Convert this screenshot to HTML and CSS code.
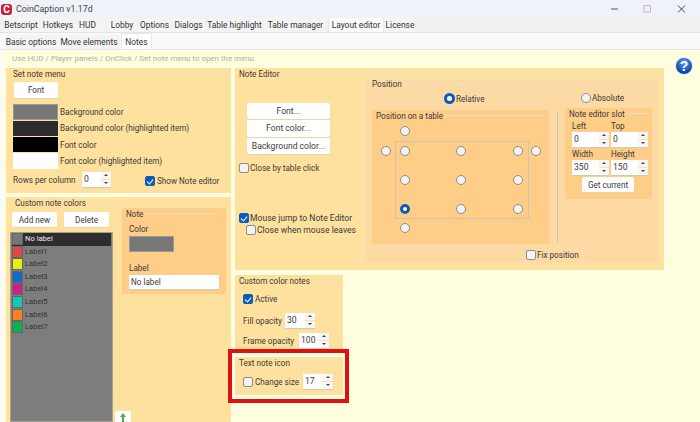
FILE: index.html
```html
<!DOCTYPE html>
<html lang="en">
<head>
  <meta charset="UTF-8">
  <title>CoinCaption</title>
  <link rel="stylesheet" href="styles.css">
</head>
<body>

<!-- Title bar -->
<div class="titlebar">
  <span class="appicon">C</span>
  <span class="apptitle">CoinCaption v1.17d</span>
  <svg class="winbtns" width="80" height="12" viewBox="0 0 80 12">
    <path d="M0 6h7" stroke="#555" fill="none"/>
    <rect x="33" y="2.5" width="6.5" height="6.5" stroke="#bbb" fill="none"/>
    <path d="M67 2.5l7 7M74 2.5l-7 7" stroke="#444" fill="none"/>
  </svg>
</div>

<!-- Tabs -->
<div class="tabs top">
  <span class="tab w36">Betscript</span>
  <span class="tab w36">Hotkeys</span>
  <span class="tab w29 left">HUD</span>
  <span class="tab w30">Lobby</span>
  <span class="tab w33">Options</span>
  <span class="tab w33">Dialogs</span>
  <span class="tab w57">Table highlight</span>
  <span class="tab w63">Table manager</span>
  <span class="tab w56 active">Layout editor</span>
  <span class="tab w30">License</span>
</div>
<div class="tabs sub">
  <span class="tab w52">Basic options</span>
  <span class="tab w62">Move elements</span>
  <span class="tab w31 active">Notes</span>
</div>

<div class="content">
  <p class="hint">Use HUD / Player panels / OnClick / Set note menu to open the menu</p>
  <span class="help">?</span>

  <div class="columns">
    <!-- Left column -->
    <div class="col-left">
      <section class="panel menu-panel">
        <div class="legend">Set note menu</div>
        <button class="btn font-btn">Font</button>
        <div class="color-row"><span class="swatch gray"></span>Background color</div>
        <div class="color-row"><span class="swatch dark"></span>Background color (highlighted item)</div>
        <div class="color-row"><span class="swatch black"></span>Font color</div>
        <div class="color-row"><span class="swatch white"></span>Font color (highlighted item)</div>
        <div class="rows-row">
          <span class="rows-cap">Rows per column</span>
          <span class="spin"><span class="val">0</span><span class="arrows"><i class="up"></i><i class="down"></i></span></span>
          <label class="check show-editor"><input type="checkbox" checked>Show Note editor</label>
        </div>
      </section>

      <section class="panel colors-panel">
        <div class="list-side">
          <div class="legend">Custom note colors</div>
          <div class="list-btns">
            <button class="btn">Add new</button>
            <button class="btn">Delete</button>
          </div>
          <ul class="labels">
            <li class="sel"><span class="chip chip0"></span>No label</li>
            <li><span class="chip chip1"></span>Label1</li>
            <li><span class="chip chip2"></span>Label2</li>
            <li><span class="chip chip3"></span>Label3</li>
            <li><span class="chip chip4"></span>Label4</li>
            <li><span class="chip chip5"></span>Label5</li>
            <li><span class="chip chip6"></span>Label6</li>
            <li><span class="chip chip7"></span>Label7</li>
          </ul>
        </div>
        <div class="note-side">
          <div class="note-box">
            <div class="legend">Note</div>
            <div class="note-cap">Color</div>
            <span class="swatch gray note-swatch"></span>
            <div class="note-cap label-cap">Label</div>
            <div class="textbox">No label</div>
          </div>
          <button class="btn up-btn">
            <svg width="6" height="9" viewBox="0 0 6 9"><path d="M3 0l3 4H4v5H2V4H0z" fill="#4fa84f"/></svg>
          </button>
        </div>
      </section>
    </div>

    <!-- Right column -->
    <div class="col-right">
      <section class="panel editor-panel">
        <div class="legend">Note Editor</div>
        <div class="editor-body">
          <div class="editor-side">
            <div class="editor-btns">
              <button class="btn">Font...</button>
              <button class="btn">Font color...</button>
              <button class="btn">Background color...</button>
            </div>
            <label class="check close-table"><input type="checkbox">Close by table click</label>
            <label class="check mouse-jump"><input type="checkbox" checked>Mouse jump to Note Editor</label>
            <label class="check close-leave"><input type="checkbox">Close when mouse leaves</label>
          </div>

          <div class="position">
            <div class="legend">Position</div>
            <div class="pos-modes">
              <label class="check relative"><input type="radio" name="mode" checked>Relative</label>
              <label class="check absolute"><input type="radio" name="mode">Absolute</label>
            </div>
            <div class="pos-body">
              <div class="table-box">
                <div class="legend">Position on a table</div>
                <div class="seats">
                  <span class="table-rect"></span>
                  <input type="radio" name="seat" class="col2 row1">
                  <input type="radio" name="seat" class="col1 row2">
                  <input type="radio" name="seat" class="col2 row2">
                  <input type="radio" name="seat" class="col3 row2">
                  <input type="radio" name="seat" class="col4 row2">
                  <input type="radio" name="seat" class="col5 row2">
                  <input type="radio" name="seat" class="col2 row3">
                  <input type="radio" name="seat" class="col3 row3">
                  <input type="radio" name="seat" class="col4 row3">
                  <input type="radio" name="seat" class="col2 row4" checked>
                  <input type="radio" name="seat" class="col3 row4">
                  <input type="radio" name="seat" class="col4 row4">
                  <input type="radio" name="seat" class="col2 row5">
                </div>
              </div>
              <span class="divider"></span>
              <div class="slot-box">
                <div class="legend">Note editor slot</div>
                <div class="slot-grid">
                  <div><div class="slot-cap">Left</div><span class="spin w37"><span class="val">0</span><span class="arrows"><i class="up"></i><i class="down"></i></span></span></div>
                  <div><div class="slot-cap">Top</div><span class="spin w37"><span class="val">0</span><span class="arrows"><i class="up"></i><i class="down"></i></span></span></div>
                  <div><div class="slot-cap">Width</div><span class="spin w37"><span class="val">350</span><span class="arrows"><i class="up"></i><i class="down"></i></span></span></div>
                  <div><div class="slot-cap">Height</div><span class="spin w37"><span class="val">150</span><span class="arrows"><i class="up"></i><i class="down"></i></span></span></div>
                </div>
                <button class="btn get-current">Get current</button>
              </div>
            </div>
            <label class="check fix-pos"><input type="checkbox">Fix position</label>
          </div>
        </div>
      </section>

      <section class="panel custom-panel">
        <div class="legend">Custom color notes</div>
        <label class="check active-check"><input type="checkbox" checked>Active</label>
        <div class="opacity-row fill"><span class="fill-cap">Fill opacity</span><span class="spin"><span class="val">30</span><span class="arrows"><i class="up"></i><i class="down"></i></span></span></div>
        <div class="opacity-row frame"><span class="frame-cap">Frame opacity</span><span class="spin"><span class="val">100</span><span class="arrows"><i class="up"></i><i class="down"></i></span></span></div>
      </section>

      <div class="redbox">
        <section class="panel icon-panel">
          <div class="legend">Text note icon</div>
          <div class="size-row">
            <label class="check size-check"><input type="checkbox">Change size</label>
            <span class="spin"><span class="val">17</span><span class="arrows"><i class="up"></i><i class="down"></i></span></span>
          </div>
        </section>
      </div>
    </div>
  </div>
</div>

</body>
</html>
```

FILE: styles.css
```css
*{box-sizing:border-box}
html,body{height:100%}
body{margin:0;width:700px;height:422px;overflow:hidden;display:flex;flex-direction:column;background:#ffffdf;font-family:Roboto,sans-serif;font-size:8.15px;line-height:12px;color:#3a3a3a}
p{margin:0}

/* title bar */
.titlebar{height:18px;flex:none;display:flex;align-items:center;background:#eff2f9;position:relative}
.appicon{width:11px;height:11px;margin-left:1px;border-radius:3px;background:#c8203c;color:#fff;font-weight:700;font-size:10px;line-height:11px;text-align:center}
.apptitle{margin-left:4px;color:#444;font-size:8.8px}
.winbtns{margin-left:auto;margin-right:9px}

/* tabs */
.tabs{display:flex;flex:none;font-size:8.4px}
.tabs.top{height:15px;padding-left:3px;background:#f0f0f0;border-bottom:1px solid #e4e4e4;gap:1px}
.tabs.sub{height:17px;padding-left:5px;padding-top:2px;background:#f9f9f9;border-bottom:1px solid #e6e6e6;gap:1px}
.tab{text-align:center;background:#f4f4f4;line-height:15px;color:#333;white-space:nowrap}
.tab.left{text-align:left;padding-left:2px}
.tab.active{background:#fbfbfb;margin-top:-1px;border:1px solid #e8e8e8;border-bottom:none;line-height:14px}
.tabs.sub .tab.active{background:#fff;margin-top:-2px;line-height:17px}
.w29{width:29px}.w30{width:30px}.w31{width:31px}.w33{width:33px}.w36{width:36px}.w52{width:52px}.w56{width:56px}.w57{width:57px}.w62{width:62px}.w63{width:63px}

.content{flex:1;min-height:0;position:relative;border-left:3px solid #fafafa;padding-left:3px}
.hint{height:18px;padding:3px 0 0 6px;color:#aeaeae;font-size:7.95px}
.help{position:absolute;left:672px;top:7px;width:18px;height:18px;border-radius:50%;background:radial-gradient(circle at 50% 30%,#5d9ce8,#0d47a8 70%);border:1px solid #dfe7f2;color:#fff;font-family:"Liberation Sans",sans-serif;font-weight:700;font-size:14px;line-height:16px;text-align:center}

.columns{display:flex;gap:4px}
.col-left{width:225px;display:flex;flex-direction:column;gap:4px}
.col-right{width:429px;display:flex;flex-direction:column}

/* panels */
.panel{background:#fee19e;padding:0 4px}
.legend{display:flex;align-items:center;gap:2px;height:11px;color:#3a3a3a;white-space:nowrap}
.legend::after{content:"";flex:1;height:1px;background:#ece3c6}

.btn{display:block;height:15px;padding:0;border:none;border-radius:2px;background:#fff;box-shadow:0 1px 1px #e3d5ae;font:inherit;color:#3a3a3a;line-height:14px}

input{appearance:none;margin:0;width:10px;height:10px;background:#f4f4f4;border:1px solid #8d8d8d;flex:none}
input[type=checkbox]{border-radius:2px}
input[type=checkbox]:checked{background:#0b5cbd;border-color:#0b5cbd;position:relative}
input[type=checkbox]:checked::after{content:"";position:absolute;left:2px;top:1px;width:3px;height:5px;border:solid #fff;border-width:0 1px 1px 0;transform:rotate(40deg)}
input[type=radio]{border-radius:50%}
input[type=radio]:checked{background:#fff;border:3px solid #0b5cbd}
.check{display:flex;align-items:center;gap:1px;white-space:nowrap}

.spin{display:inline-flex;width:30px;height:15px;background:#fff;box-shadow:0 1px 1px #d8caa4;font-size:8.6px}
.spin .val{flex:1;padding-left:2px;line-height:14px}
.spin .arrows{width:10px;display:flex;flex-direction:column;gap:1px;background:#fee19e}
.spin i{flex:1;background:#f6f6f6;position:relative}
.spin i::after{content:"";position:absolute;left:3px;top:2px;border:2px solid transparent;border-top:none;border-bottom:2px solid #444}
.spin i.down::after{border-bottom:none;border-top:2px solid #444}
.spin.w37{width:37px}

/* set note menu */
.menu-panel{height:125px;padding:0 7px}
.font-btn{width:44px;height:16px;margin:3px 0 6px 1px}
.color-row{display:flex;align-items:center;gap:2px;height:16.3px}
.swatch{display:block;width:45px;height:15.5px}
.gray{background:#777;border:1px solid #999}
.dark{background:#2d2d2d}
.black{background:#000}
.white{background:#fff}
.rows-row{display:flex;align-items:center;margin-top:3px;white-space:nowrap}
.rows-cap{width:69px}
.rows-row .spin{width:29px}
.show-editor{margin-left:34px;margin-top:3px;gap:2px}

/* custom note colors */
.colors-panel{height:240px;display:flex;gap:9px;padding:0}
.colors-panel .legend{margin-left:5px}
.list-side{width:108px;padding-left:4px}
.list-btns{display:flex;gap:7px;margin:4px 0 5px 2px}
.list-btns .btn{width:45px}
.labels{margin:0;padding:0 1px;list-style:none;height:190px;width:103px;background:#7d7d7d;border:1px solid #a3a38f}
.labels li{display:flex;align-items:center;gap:2px;height:12.55px;color:#333;font-size:7.6px}
.labels li.sel{background:#2d2d2d;color:#eee}
.chip{width:11px;height:12px;border:1px solid #666}
.chip0{background:#777}.chip1{background:#e04848}.chip2{background:#e8ee10}.chip3{background:#1468c8}.chip4{background:#cc2088}.chip5{background:#14c8b8}.chip6{background:#fa8020}.chip7{background:#08b050}
.note-side{flex:1;padding-right:5px}
.note-box{margin-top:11px;background:#fece88;height:86px;padding:0 7px}
.note-box .legend{margin-left:-3px}
.note-cap{margin-top:4px}
.note-swatch{margin-top:1px}
.label-cap{margin-top:10px}
.textbox{width:90px;height:14px;margin-top:1px;padding-left:2px;background:#fff;box-shadow:0 1px 1px #d8caa4;line-height:14px}
.up-btn{width:16px;height:14px;margin:117px 0 0 -7px;display:flex;justify-content:center;padding-top:2px}

/* note editor */
.editor-panel{height:202px}
.editor-body{display:flex;height:187px}
.editor-side{width:122px}
.editor-btns{display:flex;flex-direction:column;gap:1px;width:83px;margin:24px 0 0 8px;font-size:8.6px}
.editor-btns .btn{width:83px;height:16.3px}
.close-table{margin-top:8px}
.mouse-jump{margin-top:38px;font-size:8.6px}
.close-leave{margin-left:7px;font-size:8.6px}
.position{width:294px;margin-top:-1px;margin-left:4px;height:186px;background:#fdd9a4;padding:0 6px;border:1px solid #fbe2ab}
.position>.legend{height:10px}
.pos-modes{display:flex;height:18px;padding-left:72px;align-items:center}
.relative{width:42px;margin-top:1px}
.absolute{margin-left:95px}
.relative input{width:11px;height:11px}
.pos-body{display:flex;align-items:flex-start}
.table-box{width:177px;height:134px;margin-top:3px;background:#fece88;padding:0 4px}
.seats{display:grid;grid-template-columns:19px 20px 92px 22px 14px;grid-template-rows:20px 20px 38px 20px 18px;justify-items:center;align-items:center}
.table-rect{grid-column:2 / 5;grid-row:2 / 5;justify-self:stretch;align-self:stretch;border:1px solid #cfc4ac}
.col1{grid-column:1}.col2{grid-column:2}.col3{grid-column:3}.col4{grid-column:4}.col5{grid-column:5}
.row1{grid-row:1}.row2{grid-row:2}.row3{grid-row:3}.row4{grid-row:4}.row5{grid-row:5}
.divider{width:1px;height:130px;margin:5px 0 0 8px;background:#c9c0ad}
.slot-box{width:87px;height:91px;margin:1px 0 0 7px;background:#fece88;padding:0 4px}
.slot-grid{display:grid;grid-template-columns:39px 37px;row-gap:2px;margin:2px 0 0 3px}
.slot-cap{height:11px;line-height:11px}
.get-current{width:52px;margin:2px 0 0 13px}
.fix-pos{margin:5px 0 0 154px}

/* custom color notes */
.custom-panel{width:108px;height:74px;margin-top:5px;padding:0 8px}
.custom-panel>.legend{margin-left:-4px;height:12px}
.active-check{margin-top:6px;height:12px;gap:2px}
.opacity-row{display:flex;align-items:center}
.fill-cap{width:42px}
.frame-cap{width:56px}
.fill{margin-top:8px}
.frame{margin-top:5px}

.redbox{position:relative;width:121px;height:54px;margin-left:-7px;border:4px solid #e01010;padding:4px 3px}
.icon-panel{width:108px;height:38px;padding:0 8px}
.icon-panel>.legend{margin-left:-4px}
.size-row{display:flex;align-items:center;margin-top:6px}
.size-check{width:60px;gap:2px}
```
